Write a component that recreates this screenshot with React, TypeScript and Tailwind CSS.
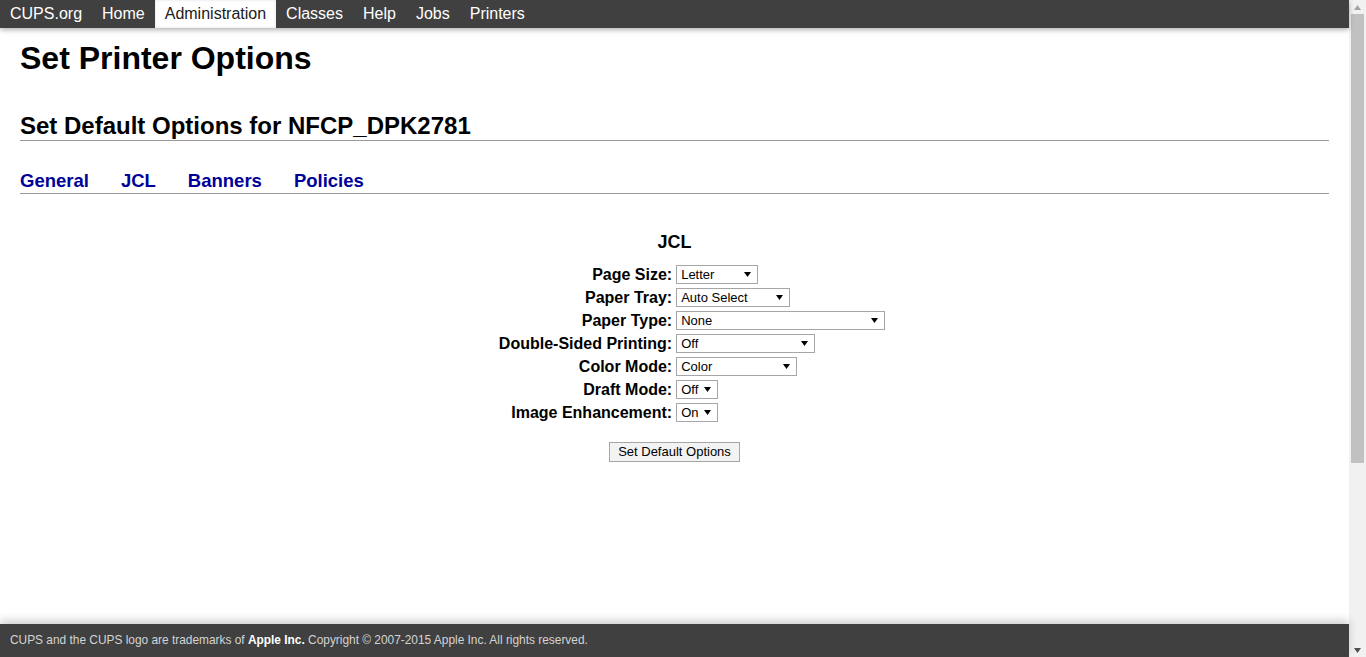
import React from "react";

type Option = {
  label: string;
  value: string;
  width: string;
};

const navItems = ["CUPS.org", "Home", "Administration", "Classes", "Help", "Jobs", "Printers"];

const tabs = ["General", "JCL", "Banners", "Policies"];

const options: Option[] = [
  { label: "Page Size", value: "Letter", width: "w-[82px]" },
  { label: "Paper Tray", value: "Auto Select", width: "w-[114px]" },
  { label: "Paper Type", value: "None", width: "w-[209px]" },
  { label: "Double-Sided Printing", value: "Off", width: "w-[139px]" },
  { label: "Color Mode", value: "Color", width: "w-[121px]" },
  { label: "Draft Mode", value: "Off", width: "w-[42px]" },
  { label: "Image Enhancement", value: "On", width: "w-[42px]" },
];

const Arrow = ({ className }: { className: string }) => (
  <svg width="7" height="5" viewBox="0 0 7 5" className={className}>
    <polygon points="0,0 7,0 3.5,5" fill="currentColor" />
  </svg>
);

const SelectBox = ({ value, width }: { value: string; width: string }) => (
  <div className="relative">
    <select
      defaultValue={value}
      className={`${width} block h-[19px] appearance-none rounded-none border border-[#a6a6a6] bg-white pl-[4px] text-[13px] leading-[17px] text-black outline-none`}
    >
      <option>{value}</option>
    </select>
    <Arrow className="pointer-events-none absolute right-[7px] top-[7px] text-black" />
  </div>
);

const App = () => {
  return (
    <div className="flex h-[657px] w-full overflow-hidden bg-white font-['Liberation_Sans',Arial,sans-serif] text-black">
      <div className="flex min-w-0 flex-1 flex-col">
        {/* Top bar */}
        <nav className="relative z-10 flex h-[28px] shrink-0 bg-[#404040] shadow-[0_2px_5px_rgba(0,0,0,0.3)]">
          {navItems.map((item) => (
            <a
              key={item}
              href="#"
              className={
                item === "Administration"
                  ? "h-[28px] bg-white px-[10px] text-[16px] leading-[28px] text-[#202020] shadow-[inset_0_0_3px_rgba(0,0,0,0.12)]"
                  : "h-[28px] px-[10px] text-[16px] leading-[28px] text-white"
              }
            >
              {item}
            </a>
          ))}
        </nav>

        {/* Page body */}
        <main className="flex-1 px-[20px] pt-[12px]">
          <h1 className="text-[32px] font-bold leading-[37px]">Set Printer Options</h1>

          <h2 className="mt-[35px] border-b border-[#999999] text-[24px] font-bold leading-[28px]">
            Set Default Options for NFCP_DPK2781
          </h2>

          <div className="mt-[29px] flex gap-[32px] border-b border-[#999999] pb-[2px]">
            {tabs.map((tab) => (
              <a key={tab} href="#" className="text-[18.5px] font-bold leading-[21px] text-[#00009a]">
                {tab}
              </a>
            ))}
          </div>

          <h3 className="mt-[38px] text-center text-[18px] font-bold leading-[21px]">JCL</h3>

          <div className="mt-[10px] flex justify-center pl-[35px]">
            <div className="grid grid-cols-[auto_auto] gap-x-[4px]">
              {options.map((opt) => (
                <React.Fragment key={opt.label}>
                  <label className="h-[23px] text-right text-[16px] font-bold leading-[23px]">
                    {opt.label}:
                  </label>
                  <div className="flex h-[23px] items-center">
                    <SelectBox value={opt.value} width={opt.width} />
                  </div>
                </React.Fragment>
              ))}
            </div>
          </div>

          <div className="mt-[18px] flex justify-center">
            <button className="h-[20px] border border-[#a6a6a6] bg-[#f3f3f3] px-[8px] text-[13px] leading-[18px] text-black">
              Set Default Options
            </button>
          </div>
        </main>

        {/* Footer */}
        <footer className="relative h-[33px] shrink-0 bg-[#404040] px-[10px] text-[11.9px] leading-[33px] text-[#d4d4d4] shadow-[0_-4px_8px_rgba(0,0,0,0.18)]">
          CUPS and the CUPS logo are trademarks of <span className="font-bold text-white">Apple Inc.</span> Copyright © 2007-2015 Apple Inc. All rights reserved.
        </footer>
      </div>

      {/* Scrollbar */}
      <div className="flex w-[17px] shrink-0 flex-col items-center bg-[#f1f1f1]">
        <div className="flex h-[14px] items-center justify-center">
          <Arrow className="rotate-180 text-[#a3a3a3]" />
        </div>
        <div className="h-[449px] w-[13px] bg-[#c1c1c1]" />
        <div className="flex-1" />
        <div className="flex h-[14px] items-center justify-center">
          <Arrow className="text-[#505050]" />
        </div>
      </div>
    </div>
  );
};

export default App;
